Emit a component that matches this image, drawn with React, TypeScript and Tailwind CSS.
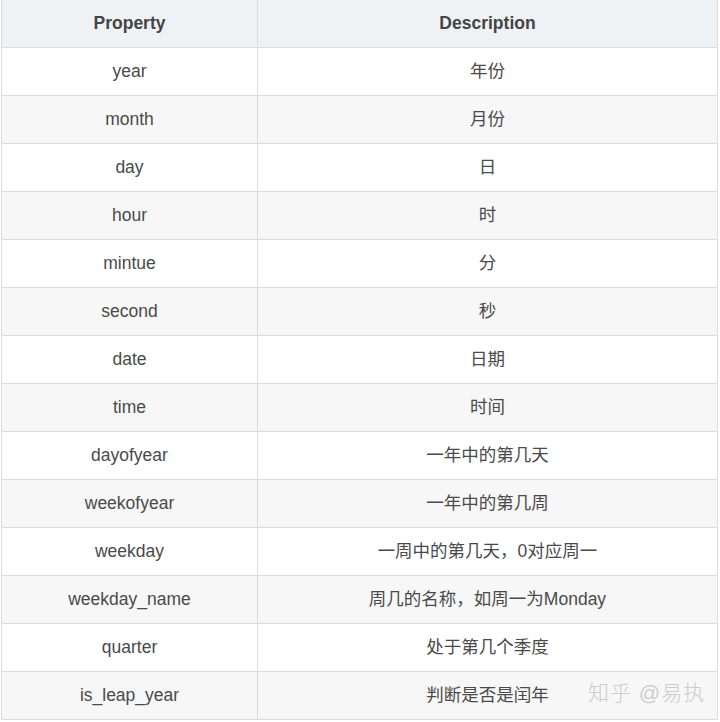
import React from "react";

const rows: [string, string][] = [
  ["year", "年份"],
  ["month", "月份"],
  ["day", "日"],
  ["hour", "时"],
  ["mintue", "分"],
  ["second", "秒"],
  ["date", "日期"],
  ["time", "时间"],
  ["dayofyear", "一年中的第几天"],
  ["weekofyear", "一年中的第几周"],
  ["weekday", "一周中的第几天，0对应周一"],
  ["weekday_name", "周几的名称，如周一为Monday"],
  ["quarter", "处于第几个季度"],
  ["is_leap_year", "判断是否是闰年"],
];

const font = { fontFamily: '"Liberation Sans", Arial, "Noto Sans CJK SC", sans-serif' };

const App = () => {
  return (
    <div className="relative w-[720px] h-[722px] bg-white pl-px text-[17.5px] text-[#4a4a4a]" style={font}>
      <div className="w-[717px] border-l border-[#dcdcdc] grid grid-cols-[256px_460px]">
        <div className="h-12 flex items-center justify-center bg-[#eff2f5] border-r border-b border-[#dcdcdc] font-bold text-[#444]">
          Property
        </div>
        <div className="h-12 flex items-center justify-center bg-[#eff2f5] border-r border-b border-[#dcdcdc] font-bold text-[#444]">
          Description
        </div>
        {rows.map(([p, d], i) => {
          const bg = i % 2 === 1 ? "bg-[#f7f7f7]" : "bg-white";
          return (
            <React.Fragment key={p}>
              <div className={`h-12 flex items-center justify-center border-r border-b border-[#dcdcdc] ${bg}`}>
                {p}
              </div>
              <div className={`h-12 flex items-center justify-center border-r border-b border-[#dcdcdc] ${bg}`}>
                {d}
              </div>
            </React.Fragment>
          );
        })}
      </div>
      <div className="absolute left-[588px] top-[677px] text-[21px] font-light text-[#cccccc] tracking-[1px]">
        知乎 @易执
      </div>
    </div>
  );
};

export default App;
